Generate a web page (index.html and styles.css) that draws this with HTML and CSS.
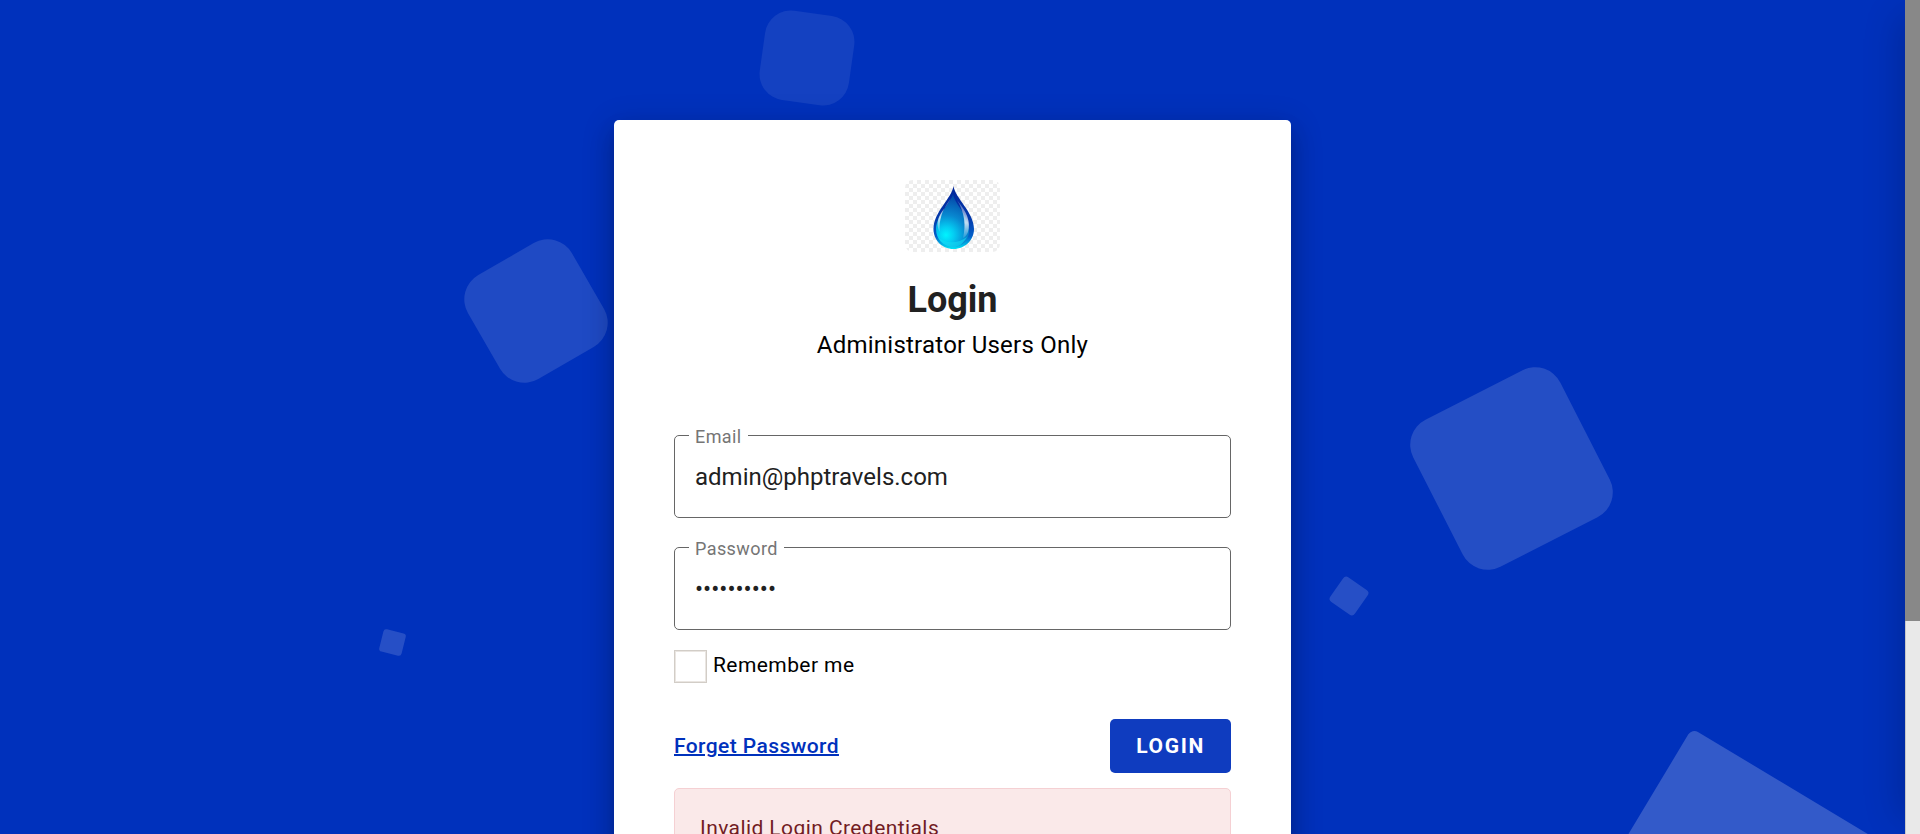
FILE: index.html
```html
<!DOCTYPE html>
<html lang="en">
<head>
<meta charset="utf-8">
<meta name="viewport" content="width=device-width, initial-scale=1">
<title>Login</title>
<link rel="stylesheet" href="styles.css">
</head>
<body>
<div class="viewport">
  <div class="scene">
    <div class="shapes" aria-hidden="true">
      <span class="shape shape-top"></span>
      <span class="shape shape-left"></span>
      <span class="shape shape-dot-left"></span>
      <span class="shape shape-right"></span>
      <span class="shape shape-dot-right"></span>
      <span class="shape shape-corner"></span>
    </div>
    <div class="drawer" aria-hidden="true"></div>
    <main class="card">
      <svg class="logo" viewBox="0 0 95 72" role="img" aria-label="Water drop">
        <defs>
          <pattern id="check" width="8" height="8" patternUnits="userSpaceOnUse">
            <rect width="8" height="8" fill="#fff"/>
            <path d="M4 0h4v4H4zM0 4h4v4H0z" fill="#eeeeee"/>
          </pattern>
          <linearGradient id="rim" x1="0" y1="0" x2="0" y2="1">
            <stop offset="0" stop-color="#02259a"/>
            <stop offset=".5" stop-color="#0338ab"/>
            <stop offset=".8" stop-color="#0360c8"/>
            <stop offset="1" stop-color="#00e4f4"/>
          </linearGradient>
          <radialGradient id="body" gradientUnits="userSpaceOnUse" cx="41" cy="55" r="40">
            <stop offset="0" stop-color="#00f4ff"/>
            <stop offset=".2" stop-color="#04ccf2"/>
            <stop offset=".5" stop-color="#0888d0"/>
            <stop offset="1" stop-color="#0446a8"/>
          </radialGradient>
          <linearGradient id="shine" x1="0" y1="0" x2="0" y2="1">
            <stop offset="0" stop-color="#fff" stop-opacity=".2"/>
            <stop offset=".6" stop-color="#fff" stop-opacity=".75"/>
            <stop offset="1" stop-color="#fff" stop-opacity=".1"/>
          </linearGradient>
        </defs>
        <rect width="95" height="72" rx="8" fill="url(#check)"/>
        <path d="M48.500 6C47 18 28.500 32 28.500 49C28.500 60 37 69 48.500 69S69 60 69 49C69 32 50 18 48.500 6z" fill="url(#rim)"/>
        <path d="M48 14C46 23 31 36 31 49C31 59 38 67 48 67C58 67 65 59 64 49C63 34 50 25 48 14z" fill="url(#body)"/>
        <path d="M46 18C37 30 33.500 40 35 52C32 48 32 42 34 37C37 30 43 25 46 18z" fill="url(#shine)"/>
        <path d="M52 20C62 32 66 42 63 52Q61 57 58 58C61 46 60 33 52 20z" fill="url(#shine)"/>
        <path d="M33 57C40 64 53 64 62 57C58 64 53 67.500 47 67.500Q38 66 33 57z" fill="#12dcf4" opacity=".6"/>
      </svg>
      <h1 class="title">Login</h1>
      <p class="subtitle">Administrator Users Only</p>
      <form class="form">
        <div class="field">
          <label class="field-label" for="email">Email</label>
          <input class="field-input" id="email" type="email" value="admin@phptravels.com">
        </div>
        <div class="field">
          <label class="field-label" for="password">Password</label>
          <input class="field-input" id="password" type="password" value="demoadmin1">
        </div>
        <div class="remember">
          <input class="remember-box" id="remember" type="checkbox">
          <label for="remember">Remember me</label>
        </div>
        <div class="actions">
          <a class="forget" href="#">Forget Password</a>
          <button class="submit" type="button">LOGIN</button>
        </div>
        <div class="alert" role="alert">Invalid Login Credentials</div>
      </form>
    </main>
  </div>
  <div class="scrollbar" aria-hidden="true"><div class="scrollbar-thumb"></div></div>
</div>
</body>
</html>
```
FILE: styles.css
```css
* { box-sizing: border-box; }

body {
  margin: 0;
  font-family: Roboto, "Liberation Sans", sans-serif;
  font-size: 21px;
  letter-spacing: 0.02em;
  color: #000;
}

.viewport {
  display: flex;
  height: 100vh;
  overflow: hidden;
}

.scene {
  position: relative;
  flex: 1;
  display: flex;
  justify-content: center;
  align-items: flex-start;
  padding-top: 120px;
  overflow: hidden;
  background: #0031bc;
}

.shapes {
  position: absolute;
  inset: 0;
}

.shape {
  position: absolute;
  background: #fff;
}

.shape-top { left: 762px; top: 13px; width: 90px; height: 90px; border-radius: 26px; opacity: .08; transform: rotate(8deg); }
.shape-left { left: 476px; top: 251px; width: 120px; height: 120px; border-radius: 28px; opacity: .12; transform: rotate(-30deg); }
.shape-dot-left { left: 381px; top: 631px; width: 23px; height: 23px; border-radius: 3px; opacity: .15; transform: rotate(14deg); }
.shape-right { left: 1429px; top: 386px; width: 165px; height: 165px; border-radius: 28px; opacity: .14; transform: rotate(-27deg); }
.shape-dot-right { left: 1334px; top: 581px; width: 30px; height: 30px; border-radius: 4px; opacity: .15; transform: rotate(35deg); }
.shape-corner { left: 1613px; top: 773px; width: 240px; height: 240px; border-radius: 7px; opacity: .2; transform: rotate(31deg); }

.drawer {
  position: absolute;
  left: 100%;
  top: 20px;
  bottom: 20px;
  width: 300px;
  box-shadow: 0 0 36px 4px rgba(0, 0, 0, .2);
}

.card {
  position: relative;
  display: flex;
  flex-direction: column;
  align-items: center;
  width: 677px;
  max-width: 100%;
  padding: 60px;
  border-radius: 5px;
  background: #fff;
  box-shadow: 0 8px 10px -5px rgba(0, 0, 0, .2), 0 16px 24px 2px rgba(0, 0, 0, .14), 0 6px 30px 5px rgba(0, 0, 0, .12);
}

.logo {
  width: 95px;
  height: 72px;
}

.title {
  margin: 26px 0 5px;
  font-size: 36px;
  line-height: 44px;
  font-weight: 700;
  letter-spacing: 0;
  color: #212121;
}

.subtitle {
  margin: 0;
  font-size: 24px;
  line-height: 36px;
  letter-spacing: 0.01em;
}

.form {
  align-self: stretch;
  margin-top: 72px;
}

.field {
  position: relative;
  margin-bottom: 29px;
}

.field + .field { margin-bottom: 20px; }

.field-label {
  position: absolute;
  left: 15px;
  top: -9px;
  padding: 0 6px;
  background: #fff;
  font-size: 18px;
  line-height: 22px;
  color: #757575;
}

.field-input {
  display: block;
  width: 100%;
  height: 83px;
  padding: 0 20px;
  border: 1px solid #666;
  border-radius: 5px;
  background: #fff;
  font: inherit;
  font-size: 24px;
  letter-spacing: 0;
  color: #212121;
}

.remember {
  display: flex;
  align-items: flex-start;
  gap: 6px;
  line-height: 30px;
}

.remember-box {
  appearance: none;
  width: 33px;
  height: 33px;
  margin: 0;
  border: 1px solid #d2cdc7;
  box-shadow: inset 0 0 0 1px #eae6e2;
  background: #fff;
}

.actions {
  display: flex;
  justify-content: space-between;
  align-items: center;
  margin: 36px 0 15px;
}

.forget {
  font-weight: 500;
  color: #0031bc;
  text-decoration-thickness: 2px;
}

.submit {
  height: 54px;
  padding: 0 26px;
  border: 0;
  border-radius: 5px;
  background: #0f3cbf;
  font: inherit;
  font-weight: 700;
  letter-spacing: 0.08em;
  color: #fff;
}

.alert {
  padding: 24px 25px;
  border: 1px solid #f5d0d3;
  border-radius: 5px;
  background: #fae9e9;
  line-height: 30px;
  color: #721c24;
}

.scrollbar {
  width: 15px;
  border-left: 1px solid #c8c8c8;
  background: #e9e9e9;
}

.scrollbar-thumb {
  height: 621px;
  margin-left: -1px;
  background: #888;
}
```
